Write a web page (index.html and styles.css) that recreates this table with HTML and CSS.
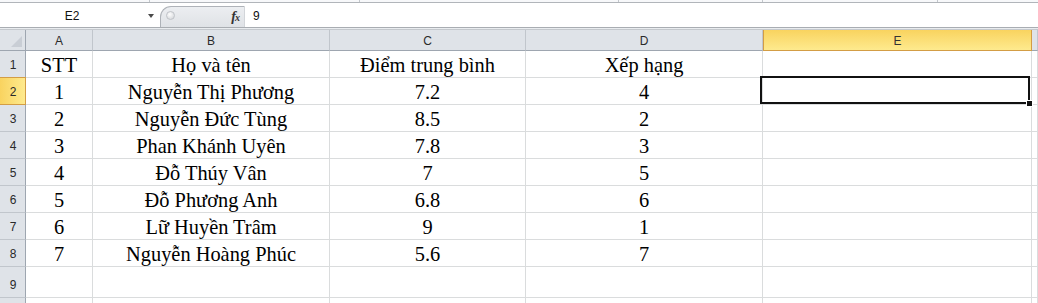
FILE: index.html
```html
<!DOCTYPE html>
<html lang="vi">

<head>
    <meta charset="UTF-8">
    <title>Bảng điểm</title>
    <link rel="stylesheet" href="styles.css">
</head>

<body>
    <div class="ribbon-edge">
        <span class="sep s1"></span>
        <span class="sep s2"></span>
        <span class="sep s3"></span>
        <span class="sep s4"></span>
        <span class="sep s5"></span>
    </div>

    <div class="formula-bar">
        <div class="name-box">
            <span class="name">E2</span>
            <span class="drop"></span>
        </div>
        <div class="fx-area">
            <span class="knob"></span>
            <span class="fx">f<i>x</i></span>
        </div>
        <div class="formula-input">9</div>
    </div>
    <div class="bar-gap"></div>

    <div class="sheet">
        <!-- column headers -->
        <div class="corner"><span class="tri"></span></div>
        <div class="col-head">A</div>
        <div class="col-head">B</div>
        <div class="col-head">C</div>
        <div class="col-head">D</div>
        <div class="col-head active">E</div>
        <div class="col-head"></div>

        <div class="row-head">1</div>
        <div class="cell">STT</div>
        <div class="cell">Họ và tên</div>
        <div class="cell">Điểm trung bình</div>
        <div class="cell">Xếp hạng</div>
        <div class="cell"></div>
        <div class="cell"></div>

        <div class="row-head active">2</div>
        <div class="cell">1</div>
        <div class="cell">Nguyễn Thị Phương</div>
        <div class="cell">7.2</div>
        <div class="cell">4</div>
        <div class="cell selected"><span class="sel-frame"><span class="handle"></span></span></div>
        <div class="cell"></div>

        <div class="row-head">3</div>
        <div class="cell">2</div>
        <div class="cell">Nguyễn Đức Tùng</div>
        <div class="cell">8.5</div>
        <div class="cell">2</div>
        <div class="cell"></div>
        <div class="cell"></div>

        <div class="row-head">4</div>
        <div class="cell">3</div>
        <div class="cell">Phan Khánh Uyên</div>
        <div class="cell">7.8</div>
        <div class="cell">3</div>
        <div class="cell"></div>
        <div class="cell"></div>

        <div class="row-head">5</div>
        <div class="cell">4</div>
        <div class="cell">Đỗ Thúy Vân</div>
        <div class="cell">7</div>
        <div class="cell">5</div>
        <div class="cell"></div>
        <div class="cell"></div>

        <div class="row-head">6</div>
        <div class="cell">5</div>
        <div class="cell">Đỗ Phương Anh</div>
        <div class="cell">6.8</div>
        <div class="cell">6</div>
        <div class="cell"></div>
        <div class="cell"></div>

        <div class="row-head">7</div>
        <div class="cell">6</div>
        <div class="cell">Lữ Huyền Trâm</div>
        <div class="cell">9</div>
        <div class="cell">1</div>
        <div class="cell"></div>
        <div class="cell"></div>

        <div class="row-head">8</div>
        <div class="cell">7</div>
        <div class="cell">Nguyễn Hoàng Phúc</div>
        <div class="cell">5.6</div>
        <div class="cell">7</div>
        <div class="cell"></div>
        <div class="cell"></div>

        <div class="row-head">9</div>
        <div class="cell"></div>
        <div class="cell"></div>
        <div class="cell"></div>
        <div class="cell"></div>
        <div class="cell"></div>
        <div class="cell"></div>

        <!-- next row, only its top edge shows -->
        <div class="row-head"></div>
        <div class="cell"></div>
        <div class="cell"></div>
        <div class="cell"></div>
        <div class="cell"></div>
        <div class="cell"></div>
        <div class="cell"></div>
    </div>
</body>

</html>
```

FILE: styles.css
```css
*,
*:before,
*:after {
    box-sizing: border-box;
    margin: 0;
    padding: 0;
}

html,
body {
    width: 100%;
    height: 100%;
    overflow: hidden;
    background: #fff;
}

body {
    font-family: "Liberation Sans", Arial, sans-serif;
    font-size: 12px;
    color: #222;
}

/* bottom edge of the ribbon */
.ribbon-edge {
    position: relative;
    height: 3px;
    background: #f7f8fa;
    border-bottom: 1px solid #b1b5ba;
}

.ribbon-edge .sep {
    position: absolute;
    top: 0;
    width: 1px;
    height: 2px;
    background: #c3c7cc;
}

.ribbon-edge .s1 { left: 149px; }
.ribbon-edge .s2 { left: 359px; }
.ribbon-edge .s3 { left: 618px; }
.ribbon-edge .s4 { left: 762px; }
.ribbon-edge .s5 { left: 937px; }

/* formula bar */
.formula-bar {
    display: flex;
    height: 25px;
    background: #fff;
    border-bottom: 1px solid #a9adb2;
}

.name-box {
    display: flex;
    align-items: center;
    width: 160px;
    padding-top: 1px;
}

.name-box .name {
    flex: 1;
    text-align: center;
    padding-right: 4px;
    font-size: 12px;
    color: #111;
}

.name-box .drop {
    width: 0;
    height: 0;
    margin-right: 6px;
    border-left: 3.5px solid transparent;
    border-right: 3.5px solid transparent;
    border-top: 4px solid #4a4a4a;
}

.fx-area {
    display: flex;
    align-items: center;
    justify-content: space-between;
    width: 85px;
    margin-top: 3px;
    padding: 0 5px 0 5px;
    background: linear-gradient(#eceef1, #dfe2e6);
    border: 1px solid #aeb2b8;
    border-right-color: #d2d5d9;
    border-bottom: none;
    border-radius: 11px 0 0 0;
}

.fx-area .knob {
    width: 9px;
    height: 9px;
    margin-top: -4px;
    border-radius: 50%;
    background: radial-gradient(circle at 40% 35%, #fdfdfd, #cfd2d6);
    border: 1px solid #c0c3c8;
}

.fx-area .fx {
    font-family: "Liberation Serif", "Times New Roman", serif;
    font-style: italic;
    font-weight: bold;
    font-size: 14px;
    color: #333;
    letter-spacing: -1px;
}

.fx-area .fx i {
    font-size: 10px;
}

.formula-input {
    flex: 1;
    display: flex;
    align-items: center;
    padding: 1px 0 0 8px;
    font-size: 12px;
    color: #111;
}

.bar-gap {
    height: 2px;
    background: #e9ecef;
    border-bottom: 1px solid #c4c8cd;
}

/* worksheet grid */
.sheet {
    display: grid;
    grid-template-columns: 26px 67px 237px 196px 237px 269px 1fr;
    grid-template-rows: 21px repeat(8, 27px) 31px 27px;
}

.corner,
.col-head,
.row-head {
    display: flex;
    justify-content: center;
    font-size: 12px;
    color: #2a2a2a;
    background: #dfe3e8;
}

.corner {
    position: relative;
    border-right: 1px solid #9ea6b0;
    border-bottom: 1px solid #9ea6b0;
}

.corner .tri {
    position: absolute;
    right: 3px;
    bottom: 3px;
    width: 0;
    height: 0;
    border-left: 11px solid transparent;
    border-bottom: 11px solid #c9ced5;
}

.col-head {
    align-items: center;
    padding-top: 1px;
    border-right: 1px solid #c1c6cc;
    border-bottom: 1px solid #9ea6b0;
}

.row-head {
    align-items: flex-end;
    padding: 0 0 5px 1px;
    border-right: 1px solid #9ea6b0;
    border-bottom: 1px solid #c1c6cc;
}

.col-head.active {
    background: linear-gradient(#f9d35f, #feea8e);
    border: 1px solid #d39d45;
    border-top: none;
    color: #333;
}

.row-head.active {
    background: linear-gradient(90deg, #f9d35f, #feea8e);
    border-right: 1px solid #d39d45;
    border-bottom: 1px solid #d39d45;
    border-top: 1px solid #d39d45;
    margin-top: -1px;
}

.cell {
    display: flex;
    align-items: flex-end;
    justify-content: center;
    padding-bottom: 2px;
    font-family: "Liberation Serif", "Times New Roman", serif;
    font-size: 20.4px;
    line-height: 20px;
    color: #000;
    white-space: nowrap;
    border-right: 1px solid #dadcdd;
    border-bottom: 1px solid #dadcdd;
}

.cell.selected {
    position: relative;
}

.sel-frame {
    position: absolute;
    top: -2px;
    left: -3px;
    right: 1px;
    bottom: 0;
    z-index: 2;
    border: 2px solid #111;
}

.sel-frame .handle {
    position: absolute;
    right: -5px;
    bottom: -5px;
    width: 7px;
    height: 7px;
    background: #111;
    border: 1px solid #fff;
}
```
